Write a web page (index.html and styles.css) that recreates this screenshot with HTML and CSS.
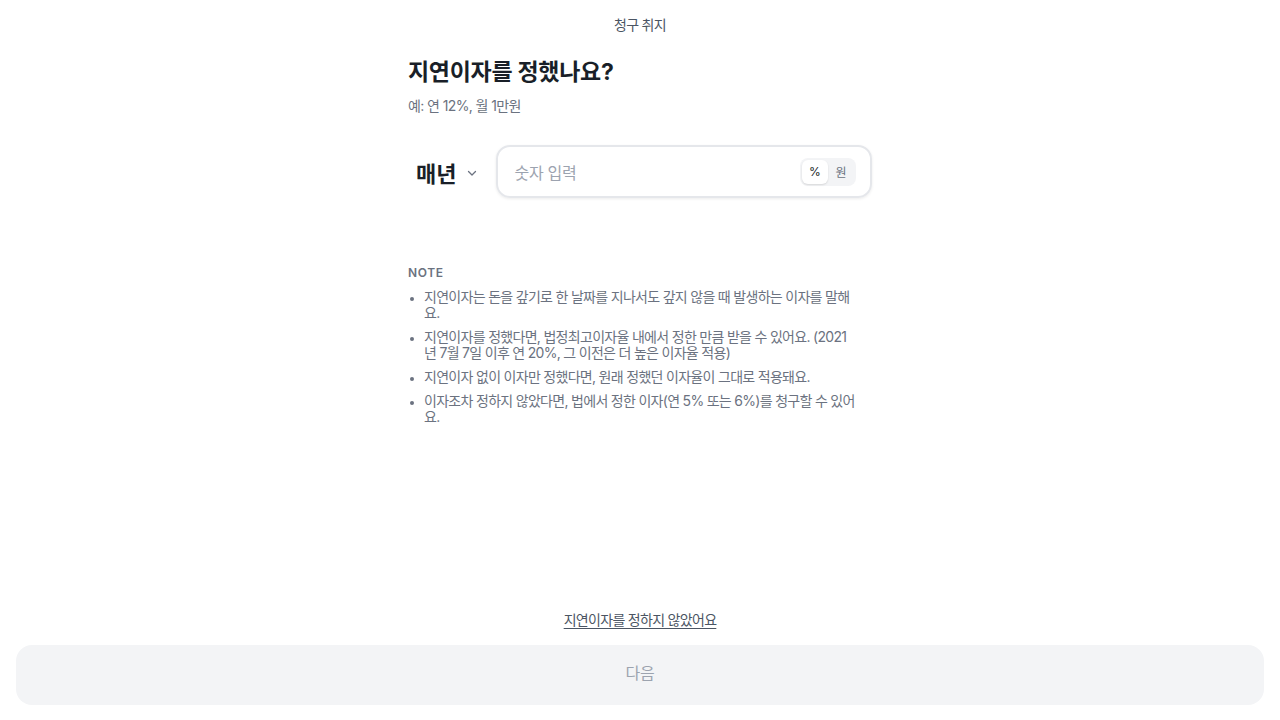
FILE: index.html
```html
<!DOCTYPE html>
<html lang="ko">
<head>
<meta charset="utf-8">
<title>지연이자</title>
<link rel="stylesheet" href="styles.css">
</head>
<body>
<div class="page">
  <header class="topbar">청구 취지</header>
  <main class="content">
    <h1 class="title">지연이자를 정했나요?</h1>
    <p class="subtitle">예: 연 12%, 월 1만원</p>
    <div class="input-row">
      <button class="period">
        <span>매년</span>
        <svg class="chev" width="12" height="12" viewBox="0 0 12 12"><path d="M2.5 4.5 L6 8 L9.5 4.5" fill="none" stroke="#6b7280" stroke-width="1.3" stroke-linecap="round" stroke-linejoin="round"/></svg>
      </button>
      <div class="field">
        <span class="placeholder">숫자 입력</span>
        <div class="toggle">
          <span class="opt active">%</span>
          <span class="opt">원</span>
        </div>
      </div>
    </div>
    <section class="note">
      <div class="note-label">NOTE</div>
      <ul class="note-list">
        <li>지연이자는 돈을 갚기로 한 날짜를 지나서도 갚지 않을 때 발생하는 이자를 말해요.</li>
        <li>지연이자를 정했다면, 법정최고이자율 내에서 정한 만큼 받을 수 있어요. (2021년 7월 7일 이후 연 20%, 그 이전은 더 높은 이자율 적용)</li>
        <li>지연이자 없이 이자만 정했다면, 원래 정했던 이자율이 그대로 적용돼요.</li>
        <li>이자조차 정하지 않았다면, 법에서 정한 이자(연 5% 또는 6%)를 청구할 수 있어요.</li>
      </ul>
    </section>
  </main>
  <footer class="bottom">
    <a class="skip" href="#">지연이자를 정하지 않았어요</a>
    <button class="next">다음</button>
  </footer>
</div>
</body>
</html>
```

FILE: styles.css
```css
* { box-sizing: border-box; }
html, body { margin: 0; padding: 0; }
body {
  font-family: Inter, "Noto Sans CJK KR", sans-serif;
  background: #ffffff;
  color: #191f28;
}
.page {
  height: 720px;
  display: flex;
  flex-direction: column;
}
.topbar {
  height: 47px;
  display: flex;
  align-items: center;
  justify-content: center;
  font-size: 14px;
  color: #4b5563;
  letter-spacing: -0.7px;
}
.content {
  width: 464px;
  margin: 0 auto;
  padding-top: 11px;
  flex: 1;
}
.title {
  margin: 0;
  font-size: 23px;
  line-height: 28px;
  font-weight: 700;
  color: #191f28;
  letter-spacing: -0.3px;
}
.subtitle {
  margin: 10px 0 0;
  font-size: 14px;
  line-height: 20px;
  color: #6b7280;
  letter-spacing: -0.6px;
}
.input-row {
  margin-top: 29px;
  display: flex;
  align-items: center;
  gap: 10px;
}
.period {
  display: flex;
  align-items: center;
  gap: 10px;
  border: none;
  background: none;
  padding: 0 8px;
  font-family: inherit;
  font-size: 22px;
  font-weight: 700;
  color: #191f28;
  height: 52px;
}
.chev { margin-top: 2px; }
.field {
  flex: 1;
  height: 53px;
  border: 2px solid #e5e7eb;
  border-radius: 14px;
  box-shadow: 0 1px 3px rgba(0,0,0,0.08);
  display: flex;
  align-items: center;
  justify-content: space-between;
  padding: 0 14px 0 16px;
}
.placeholder {
  font-size: 16px;
  color: #9ca3af;
  letter-spacing: -0.3px;
}
.toggle {
  display: flex;
  background: #f3f4f6;
  border-radius: 8px;
  padding: 2px;
  height: 28px;
}
.opt {
  display: flex;
  align-items: center;
  justify-content: center;
  width: 26px;
  font-size: 12px;
  color: #6b7280;
  border-radius: 6px;
}
.opt.active {
  background: #ffffff;
  color: #191f28;
  box-shadow: 0 1px 2px rgba(0,0,0,0.12);
}
.note {
  margin-top: 67px;
}
.note-label {
  font-size: 12px;
  line-height: 16px;
  font-weight: 600;
  letter-spacing: 0.6px;
  color: #6b7280;
}
.note-list {
  margin: 8px 0 0;
  padding: 0 16px 0 16px;
  font-size: 14px;
  line-height: 16px;
  color: #6b7280;
  letter-spacing: -0.7px;
  word-break: break-all;
}
.note-list li {
  margin-bottom: 8px;
}
.note-list li::marker { font-size: 11px; }
.bottom {
  display: flex;
  flex-direction: column;
  align-items: center;
  padding: 0 16px 15px;
}
.skip {
  font-size: 14px;
  line-height: 20px;
  color: #4b5563;
  text-decoration: underline;
  text-underline-offset: 3px;
  margin-bottom: 15px;
  letter-spacing: -0.7px;
}
.next {
  width: 100%;
  height: 60px;
  border: none;
  border-radius: 16px;
  background: #f3f4f6;
  color: #9ca3af;
  font-family: inherit;
  font-size: 16px;
  padding: 0 0 6px;
  letter-spacing: -0.3px;
}
```
